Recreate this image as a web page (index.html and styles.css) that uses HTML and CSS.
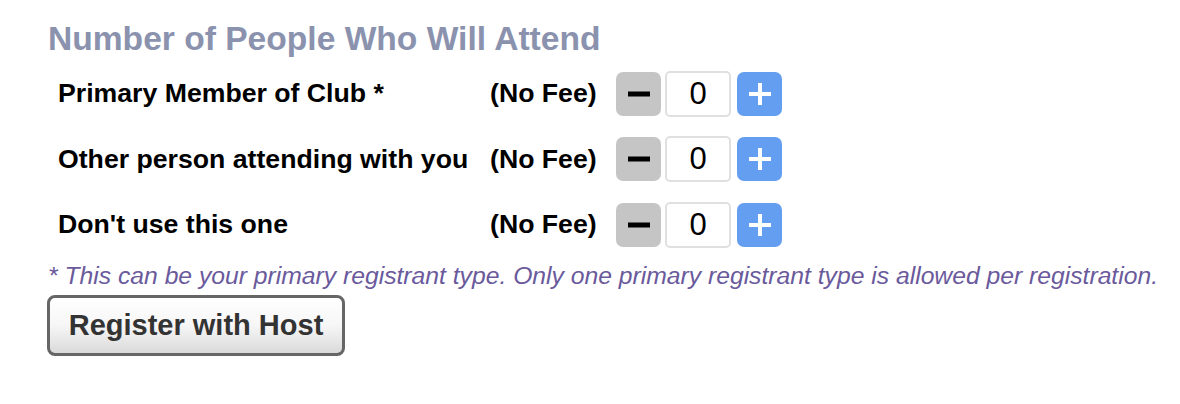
FILE: index.html
```html
<!DOCTYPE html>
<html>
<head>
<meta charset="utf-8">
<link rel="stylesheet" href="styles.css">
</head>
<body>
<div class="wrap">
  <h2 class="title">Number of People Who Will Attend</h2>
  <div class="grid">
    <div class="label">Primary Member of Club *</div>
    <div class="fee">(No Fee)</div>
    <div class="ctrl">
      <button class="btn minus" type="button"><svg width="22" height="22" viewBox="0 0 22 22"><rect x="0" y="8.5" width="22" height="5" fill="#000"/></svg></button>
      <input class="qty" type="text" value="0">
      <button class="btn plus" type="button"><svg width="22" height="22" viewBox="0 0 22 22"><rect x="0" y="9" width="22" height="4" fill="#fff"/><rect x="9" y="0" width="4" height="22" fill="#fff"/></svg></button>
    </div>

    <div class="label">Other person attending with you</div>
    <div class="fee">(No Fee)</div>
    <div class="ctrl">
      <button class="btn minus" type="button"><svg width="22" height="22" viewBox="0 0 22 22"><rect x="0" y="8.5" width="22" height="5" fill="#000"/></svg></button>
      <input class="qty" type="text" value="0">
      <button class="btn plus" type="button"><svg width="22" height="22" viewBox="0 0 22 22"><rect x="0" y="9" width="22" height="4" fill="#fff"/><rect x="9" y="0" width="4" height="22" fill="#fff"/></svg></button>
    </div>

    <div class="label">Don't use this one</div>
    <div class="fee">(No Fee)</div>
    <div class="ctrl">
      <button class="btn minus" type="button"><svg width="22" height="22" viewBox="0 0 22 22"><rect x="0" y="8.5" width="22" height="5" fill="#000"/></svg></button>
      <input class="qty" type="text" value="0">
      <button class="btn plus" type="button"><svg width="22" height="22" viewBox="0 0 22 22"><rect x="0" y="9" width="22" height="4" fill="#fff"/><rect x="9" y="0" width="4" height="22" fill="#fff"/></svg></button>
    </div>
  </div>
  <p class="note">* This can be your primary registrant type. Only one primary registrant type is allowed per registration.</p>
  <button class="register" type="button">Register with Host</button>
</div>
</body>
</html>
```

FILE: styles.css
```css
html, body {
  margin: 0;
  padding: 0;
  background: #fff;
}
body {
  font-family: "Liberation Sans", Arial, sans-serif;
}
.wrap {
  padding-left: 48px;
}
.title {
  margin: 19px 0 0 0;
  font-size: 33.6px;
  line-height: 40px;
  font-weight: bold;
  color: #8a92ae;
}
.grid {
  display: grid;
  grid-template-columns: 432px 126px auto;
  grid-auto-rows: 65.5px;
  margin: 2px 0 0 10px;
  align-items: center;
}
.label, .fee {
  font-size: 26.67px;
  font-weight: bold;
  color: #000;
  white-space: nowrap;
}
.ctrl {
  display: flex;
  align-items: center;
}
.btn {
  width: 45px;
  height: 44px;
  border: none;
  border-radius: 7px;
  padding: 0;
  margin: 0;
  display: flex;
  align-items: center;
  justify-content: center;
}
.minus {
  background: #c5c5c5;
}
.plus {
  background: #649ef0;
  margin-left: 6px;
}
.qty {
  box-sizing: border-box;
  width: 66px;
  height: 46px;
  margin: 0 0 0 4px;
  border: 2px solid #e0e0e0;
  border-radius: 5px;
  text-align: center;
  font-family: "Liberation Sans", Arial, sans-serif;
  font-size: 31px;
  color: #000;
  padding: 0;
  background: #fff;
}
.note {
  margin: 4px 0 0 0;
  font-size: 24.7px;
  line-height: 28px;
  font-style: italic;
  color: #6a5a9c;
  white-space: nowrap;
}
.register {
  box-sizing: border-box;
  margin: 5.5px 0 0 -1px;
  width: 298px;
  height: 61px;
  border: 3px solid #666;
  border-radius: 8px;
  background: linear-gradient(to bottom, #ffffff 0%, #f6f6f6 50%, #dadada 100%);
  font-family: "Liberation Sans", Arial, sans-serif;
  font-size: 29px;
  font-weight: bold;
  color: #333;
  padding: 0;
}
```
